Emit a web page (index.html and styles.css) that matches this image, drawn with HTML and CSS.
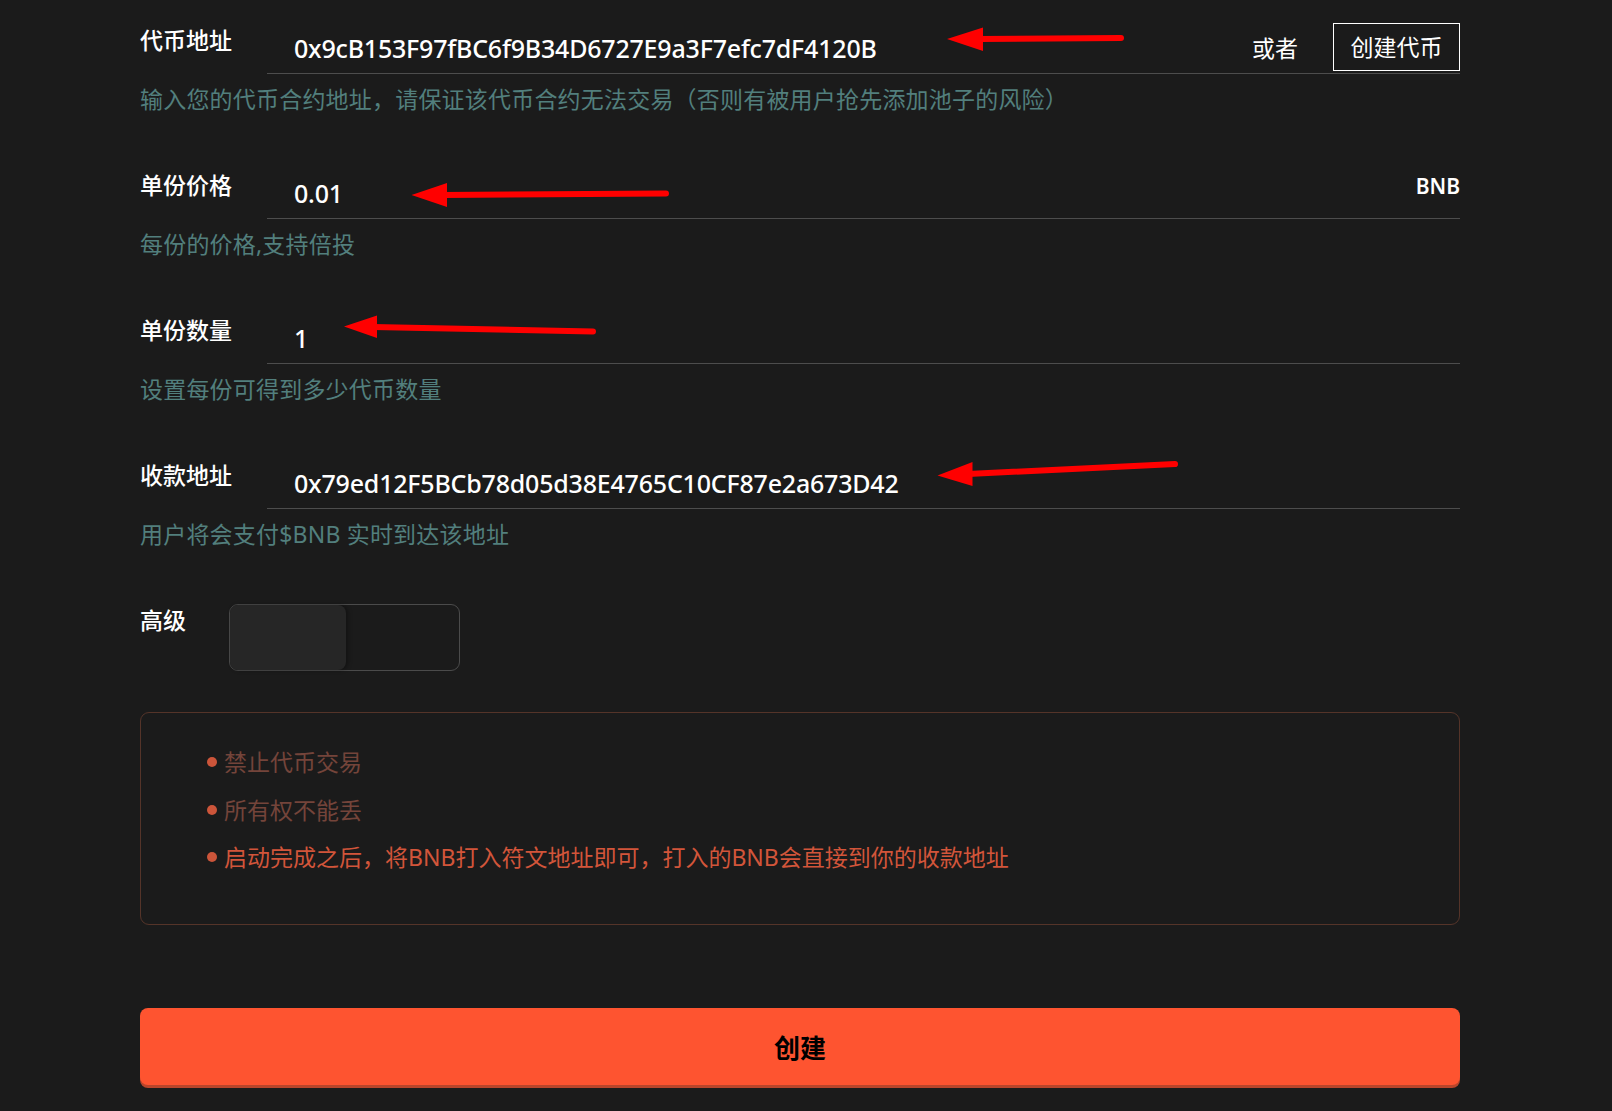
FILE: index.html
```html
<!DOCTYPE html>
<html lang="zh-CN">
<head>
<meta charset="utf-8">
<title>创建</title>
<link rel="stylesheet" href="styles.css">
</head>
<body>
<div class="page">
  <div class="form">
    <div class="field">
      <div class="field-row">
        <div class="label">代币地址</div>
        <div class="input-wrap">
          <span class="value">0x9cB153F97fBC6f9B34D6727E9a3F7efc7dF4120B</span>
          <span class="or">或者</span>
          <button class="btn-outline">创建代币</button>
        </div>
      </div>
      <div class="help">输入您的代币合约地址，请保证该代币合约无法交易（否则有被用户抢先添加池子的风险）</div>
    </div>

    <div class="field">
      <div class="field-row">
        <div class="label">单份价格</div>
        <div class="input-wrap">
          <span class="value">0.01</span>
          <span class="suffix">BNB</span>
        </div>
      </div>
      <div class="help">每份的价格,支持倍投</div>
    </div>

    <div class="field">
      <div class="field-row">
        <div class="label">单份数量</div>
        <div class="input-wrap">
          <span class="value">1</span>
        </div>
      </div>
      <div class="help">设置每份可得到多少代币数量</div>
    </div>

    <div class="field">
      <div class="field-row">
        <div class="label">收款地址</div>
        <div class="input-wrap">
          <span class="value">0x79ed12F5BCb78d05d38E4765C10CF87e2a673D42</span>
        </div>
      </div>
      <div class="help">用户将会支付$BNB 实时到达该地址</div>
    </div>

    <div class="adv-row">
      <div class="label adv-label">高级</div>
      <div class="toggle"><div class="knob"></div></div>
    </div>

    <div class="notice">
      <ul class="notice-list">
        <li>禁止代币交易</li>
        <li>所有权不能丢</li>
        <li class="strong">启动完成之后，将BNB打入符文地址即可，打入的BNB会直接到你的收款地址</li>
      </ul>
    </div>

    <button class="submit">创建</button>
  </div>

  <svg class="annotations" width="1612" height="1111" viewBox="0 0 1612 1111">
    <g fill="#ff0000" stroke="#ff0000" stroke-linecap="round">
      <polygon stroke="none" points="947,39 983,27.5 983,51"/>
      <line x1="979" y1="39" x2="1121" y2="38" stroke-width="6"/>
      <polygon stroke="none" points="411.5,195 447,183 447,207"/>
      <line x1="443" y1="195" x2="666" y2="193.5" stroke-width="6"/>
      <polygon stroke="none" points="344,326.5 377,315.5 377,338"/>
      <line x1="373" y1="327" x2="593" y2="331.5" stroke-width="6"/>
      <polygon stroke="none" points="937.5,475.5 972.5,462 972.5,486"/>
      <line x1="968" y1="474" x2="1175" y2="464" stroke-width="6"/>
    </g>
  </svg>
</div>
</body>
</html>
```
FILE: styles.css
```css
* { box-sizing: border-box; }

html, body {
  margin: 0;
  padding: 0;
  background: #1b1b1b;
}

body {
  font-family: "Noto Sans", "Noto Sans CJK SC", sans-serif;
  color: #ffffff;
  height: 1111px;
  overflow: hidden;
}

.page {
  position: relative;
  width: 1612px;
  height: 1111px;
}

.form {
  margin-left: 140px;
  width: 1320px;
  padding-top: 24px;
}

.field {
  margin-bottom: 54px;
}

.field-row {
  display: flex;
  align-items: flex-start;
}

.label {
  width: 127px;
  flex-shrink: 0;
  font-size: 23px;
  line-height: 32px;
  color: #ffffff;
  font-weight: 500;
}

.input-wrap {
  flex: 1;
  display: flex;
  align-items: center;
  height: 50px;
  border-bottom: 1px solid #4d4d4d;
  padding-left: 27px;
}

.value {
  flex: 1;
  font-size: 25px;
  font-weight: 500;
  color: #ffffff;
  line-height: 49px;
  letter-spacing: -0.2px;
}

.or {
  font-size: 23px;
  margin-right: 35px;
  margin-bottom: 4px;
  color: #ffffff;
}

.btn-outline {
  align-self: flex-start;
  margin-top: -1px;
  width: 127px;
  height: 48px;
  border: 1px solid #ffffff;
  background: transparent;
  color: #ffffff;
  font-family: "Noto Sans CJK SC", sans-serif;
  font-size: 23px;
  padding: 0 0 2px;
}

.suffix {
  align-self: flex-start;
  line-height: 34px;
  font-size: 21px;
  font-weight: 600;
  color: #ffffff;
}

.help {
  margin-top: 9px;
  font-size: 23px;
  line-height: 32px;
  color: #527f7d;
  letter-spacing: 0.2px;
}

.adv-row {
  display: flex;
  align-items: flex-start;
  height: 67px;
}

.adv-label {
  width: 89px;
}

.toggle {
  width: 231px;
  height: 67px;
  border: 1px solid #4b4b4b;
  border-radius: 9px;
  display: flex;
}

.knob {
  width: 116px;
  height: 100%;
  background: #262626;
  border-radius: 8px;
  box-shadow: 2px 0 4px rgba(0, 0, 0, 0.35);
}

.notice {
  margin-top: 41px;
  height: 213px;
  border: 1px solid #553429;
  border-radius: 9px;
  padding: 31px 0 0 66px;
}

.notice-list {
  list-style: none;
  margin: 0;
  padding: 0;
}

.notice-list li {
  display: flex;
  align-items: center;
  font-size: 23px;
  line-height: 36px;
  color: #74443a;
  margin-bottom: 11.5px;
}

.notice-list li::before {
  content: "";
  width: 10px;
  height: 10px;
  border-radius: 50%;
  background: #cc553a;
  margin-right: 7px;
  flex-shrink: 0;
}

.notice-list li.strong {
  color: #d2553a;
}

.submit {
  display: block;
  margin-top: 83px;
  width: 100%;
  height: 77px;
  background: #fe5430;
  border: none;
  border-radius: 8px;
  box-shadow: 0 3px 0 #b9452b;
  font-family: "Noto Sans CJK SC", sans-serif;
  font-size: 26px;
  font-weight: 700;
  color: #000000;
  padding: 0;
}

.annotations {
  position: absolute;
  left: 0;
  top: 0;
  pointer-events: none;
}
```
